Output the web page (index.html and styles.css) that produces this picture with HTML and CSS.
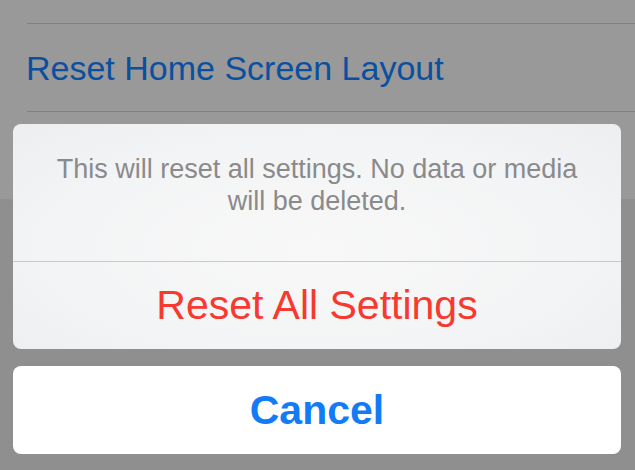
FILE: index.html
```html
<!DOCTYPE html>
<html lang="en">
<head>
<meta charset="utf-8">
<title>Reset</title>
<link rel="stylesheet" href="styles.css">
</head>
<body>
<div class="screen">
  <div class="list">
    <div class="row"><span class="row-label">Reset Home Screen Layout</span></div>
    <div class="row"></div>
  </div>
  <div class="sheet">
    <div class="group">
      <div class="message">This will reset all settings. No data or media will be deleted.</div>
      <div class="action destructive">Reset All Settings</div>
    </div>
    <div class="cancel">Cancel</div>
  </div>
</div>
</body>
</html>
```
FILE: styles.css
```css
html, body {
  margin: 0;
  padding: 0;
}
body {
  width: 635px;
  height: 470px;
  overflow: hidden;
  background: #8f8f8f;
  font-family: "Liberation Sans", Arial, sans-serif;
}
.screen {
  position: relative;
  width: 635px;
  height: 470px;
}
.list {
  background: #999999;
  padding-top: 23px;
  padding-left: 27px;
}
.row {
  display: flex;
  align-items: center;
  height: 87px;
  border-top: 1px solid #808080;
}
.row-label {
  font-size: 34px;
  color: #0b4f9f;
  line-height: 1;
  margin-left: -1px;
}
.sheet {
  position: absolute;
  left: 13px;
  top: 124px;
  width: 608px;
  display: flex;
  flex-direction: column;
  gap: 17px;
}
.group {
  border-radius: 8px;
  overflow: hidden;
  background: radial-gradient(ellipse at 50% 55%, #f8f8f8 0%, #f3f4f5 60%, #eceef0 100%);
}
.message {
  box-sizing: border-box;
  height: 138px;
  padding: 29px 40px 0;
  text-align: center;
  font-size: 27px;
  line-height: 32px;
  color: #8a8a8c;
  border-bottom: 1px solid #c9c9cb;
}
.action {
  height: 87px;
  line-height: 87px;
  text-align: center;
  font-size: 41px;
}
.destructive {
  color: #f7392f;
}
.cancel {
  height: 88px;
  line-height: 88px;
  text-align: center;
  background: #ffffff;
  border-radius: 8px;
  font-size: 41px;
  font-weight: bold;
  color: #127cf6;
}
```
